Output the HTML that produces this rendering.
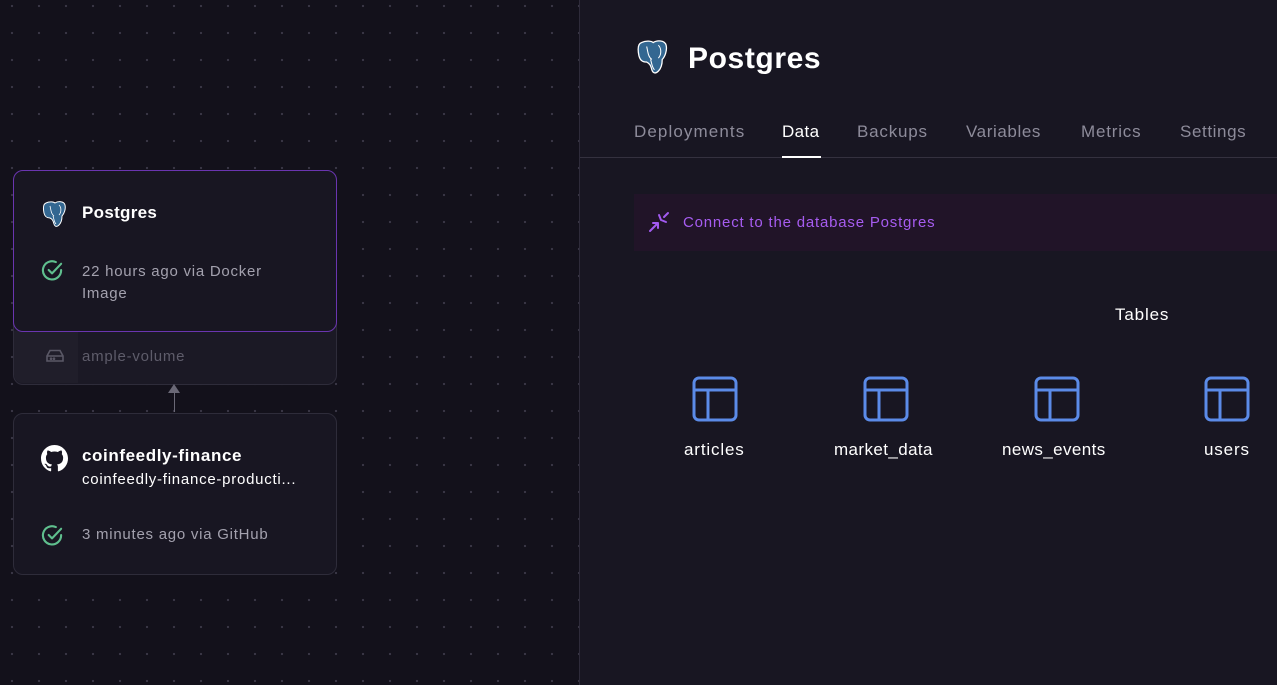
<!DOCTYPE html>
<html><head><meta charset="utf-8">
<style>
*{box-sizing:border-box;margin:0;padding:0}
body{width:1277px;height:685px;overflow:hidden;background:#13111b;font-family:"Liberation Sans",sans-serif;position:relative}
.canvas{position:absolute;left:0;top:0;width:579px;height:685px;background-color:#13111b;background-image:radial-gradient(circle,#3a3746 1px,transparent 1.3px);background-size:27px 27px;background-position:-1.5px -7.5px}
.panel{position:absolute;left:579px;top:0;width:698px;height:685px;background:#181622;border-left:1px solid #2e2b3a}
.card{position:absolute;background:#181622;border:1px solid #2e2c3a;border-radius:10px}
.t{position:absolute;color:#fff;white-space:nowrap;letter-spacing:0.05em}
.g{color:#a3a1ae}
.tab{position:absolute;top:122px;font-size:17px;color:#8d8b9a;letter-spacing:0.6px}
</style></head><body>
<div class="canvas"></div>

<div class="card" style="left:13px;top:300px;width:324px;height:85px;background:#1b1925"></div>
<div style="position:absolute;left:14px;top:331px;width:64px;height:52px;background:#201e2a;border-bottom-left-radius:9px"></div>
<svg style="position:absolute;left:46px;top:349px" width="18" height="14" viewBox="0 0 18 14" fill="none" stroke="#5a5866" stroke-width="1.6"><path d="M1 7 L4 1.5 H14 L17 7 V12 H1 Z M1 7 H17"/><circle cx="5" cy="9.7" r=".5" fill="#5a5866"/><circle cx="8" cy="9.7" r=".5" fill="#5a5866"/></svg>
<div class="t" style="left:82px;top:348px;font-size:15px;color:#5e5c6a">ample-volume</div>

<div class="card" style="left:13px;top:170px;width:324px;height:162px;border-color:#6a35b0"></div>
<svg style="position:absolute;left:42px;top:201px" width="25" height="27" viewBox="0 0 25 27"><path d="M4 2 C8 0 12 1 13 2 C16 0 22 0 23 4 C24 8 22 13 20 15 C20 19 19 22 17 24 C15 26 13 26 12 23 C11 19 10 18 8 17 C5 17 3 16 2 12 C1 7 1 3 4 2Z" fill="#336791" stroke="#fff" stroke-width="1"/><path d="M8 5 C9 9 9 13 12 15 M17 4 C20 7 19 12 17 14 M11 15 C12 18 12 21 14 23" fill="none" stroke="#fff" stroke-width=".8"/></svg>
<div class="t" style="left:82px;top:203px;font-size:17px;font-weight:bold;letter-spacing:0.3px">Postgres</div>
<svg style="position:absolute;left:41px;top:259px" width="23" height="23" viewBox="0 0 24 24" fill="none" stroke="#5fbf8e" stroke-width="2.2" stroke-linecap="round" stroke-linejoin="round"><path d="M21 11.5A9.5 9.5 0 1 1 15.5 3.2"/><path d="M8 11.5l3.5 3.5L21 5"/></svg>
<div class="t g" style="left:82px;top:261px;font-size:15px;line-height:22px">22 hours ago via Docker<br>Image</div>

<div style="position:absolute;left:173.5px;top:392px;width:1.5px;height:20px;background:#6a6876"></div>
<div style="position:absolute;left:168px;top:384px;width:0;height:0;border-left:6px solid transparent;border-right:6px solid transparent;border-bottom:9px solid #6a6876"></div>

<div class="card" style="left:13px;top:413px;width:324px;height:162px"></div>
<svg style="position:absolute;left:41px;top:445px" width="27" height="27" viewBox="0 0 16 16"><path fill="#fff" d="M8 0C3.58 0 0 3.58 0 8c0 3.540 2.290 6.530 5.470 7.590.4.07.55-.17.55-.38 0-.19-.01-.82-.01-1.49-2.010.37-2.530-.49-2.690-.94-.09-.23-.48-.94-.82-1.130-.28-.15-.68-.52-.01-.53.63-.01 1.080.58 1.230.82.72 1.210 1.870.87 2.330.66.07-.52.28-.87.51-1.070-1.780-.2-3.640-.89-3.640-3.950 0-.87.31-1.590.82-2.150-.08-.2-.36-1.020.08-2.120 0 0 .67-.21 2.200.82.64-.18 1.320-.27 2-.27.68 0 1.360.09 2 .27 1.530-1.040 2.200-.82 2.200-.82.44 1.100.16 1.920.08 2.120.51.56.82 1.270.82 2.150 0 3.070-1.870 3.750-3.650 3.950.29.25.54.73.54 1.480 0 1.070-.01 1.930-.01 2.200 0 .21.15.46.55.38A8.013 8.013 0 0016 8c0-4.420-3.580-8-8-8z"/></svg>
<div class="t" style="left:82px;top:446px;font-size:17px;font-weight:bold;letter-spacing:0.6px">coinfeedly-finance</div>
<div class="t" style="left:82px;top:471px;font-size:15px">coinfeedly-finance-producti...</div>
<svg style="position:absolute;left:41px;top:524px" width="23" height="23" viewBox="0 0 24 24" fill="none" stroke="#5fbf8e" stroke-width="2.2" stroke-linecap="round" stroke-linejoin="round"><path d="M21 11.5A9.5 9.5 0 1 1 15.5 3.2"/><path d="M8 11.5l3.5 3.5L21 5"/></svg>
<div class="t g" style="left:82px;top:526px;font-size:15px">3 minutes ago via GitHub</div>

<div class="panel"></div>
<svg style="position:absolute;left:636px;top:40px" width="33" height="35" viewBox="0 0 25 27"><path d="M4 2 C8 0 12 1 13 2 C16 0 22 0 23 4 C24 8 22 13 20 15 C20 19 19 22 17 24 C15 26 13 26 12 23 C11 19 10 18 8 17 C5 17 3 16 2 12 C1 7 1 3 4 2Z" fill="#336791" stroke="#fff" stroke-width="1"/><path d="M8 5 C9 9 9 13 12 15 M17 4 C20 7 19 12 17 14 M11 15 C12 18 12 21 14 23" fill="none" stroke="#fff" stroke-width=".8"/></svg>
<div class="t" style="left:688px;top:42px;font-size:30px;font-weight:bold;letter-spacing:0.6px">Postgres</div>

<div class="tab" style="left:634px;letter-spacing:1.1px">Deployments</div>
<div class="tab" style="left:782px;color:#fff;letter-spacing:0.4px">Data</div>
<div class="tab" style="left:857px;letter-spacing:0.8px">Backups</div>
<div class="tab" style="left:966px">Variables</div>
<div class="tab" style="left:1081px;letter-spacing:0.8px">Metrics</div>
<div class="tab" style="left:1180px">Settings</div>
<div style="position:absolute;left:580px;top:157px;width:697px;height:1px;background:#34313f"></div>
<div style="position:absolute;left:782px;top:156px;width:39px;height:2px;background:#fff"></div>

<div style="position:absolute;left:634px;top:194px;width:643px;height:57px;background:#211428"></div>
<svg style="position:absolute;left:647px;top:210px" width="24" height="24" viewBox="0 0 24 24" fill="none" stroke="#a25af0" stroke-width="2" stroke-linecap="round" stroke-linejoin="round"><path d="M3 21 L11 13 M6 13 H11 V18 M21 3 L17 7 M19 12 L14 10 L12 5"/></svg>
<div class="t" style="left:683px;top:214px;font-size:15px;color:#a65cf0;letter-spacing:0.8px">Connect to the database Postgres</div>

<div class="t" style="left:1115px;top:305px;font-size:17px">Tables</div>

<svg style="position:absolute;left:692px;top:376px" width="46" height="46" viewBox="0 0 46 46" fill="none" stroke="#5b8be8" stroke-width="3"><rect x="2" y="2" width="42" height="42" rx="5"/><path d="M2 14 H44 M16 14 V44"/></svg>
<svg style="position:absolute;left:863px;top:376px" width="46" height="46" viewBox="0 0 46 46" fill="none" stroke="#5b8be8" stroke-width="3"><rect x="2" y="2" width="42" height="42" rx="5"/><path d="M2 14 H44 M16 14 V44"/></svg>
<svg style="position:absolute;left:1034px;top:376px" width="46" height="46" viewBox="0 0 46 46" fill="none" stroke="#5b8be8" stroke-width="3"><rect x="2" y="2" width="42" height="42" rx="5"/><path d="M2 14 H44 M16 14 V44"/></svg>
<svg style="position:absolute;left:1204px;top:376px" width="46" height="46" viewBox="0 0 46 46" fill="none" stroke="#5b8be8" stroke-width="3"><rect x="2" y="2" width="42" height="42" rx="5"/><path d="M2 14 H44 M16 14 V44"/></svg>
<div class="t" style="left:684px;top:440px;font-size:17px">articles</div>
<div class="t" style="left:834px;top:440px;font-size:17px;letter-spacing:0.4px">market_data</div>
<div class="t" style="left:1002px;top:440px;font-size:17px;letter-spacing:0.4px">news_events</div>
<div class="t" style="left:1204px;top:440px;font-size:17px">users</div>
</body></html>
